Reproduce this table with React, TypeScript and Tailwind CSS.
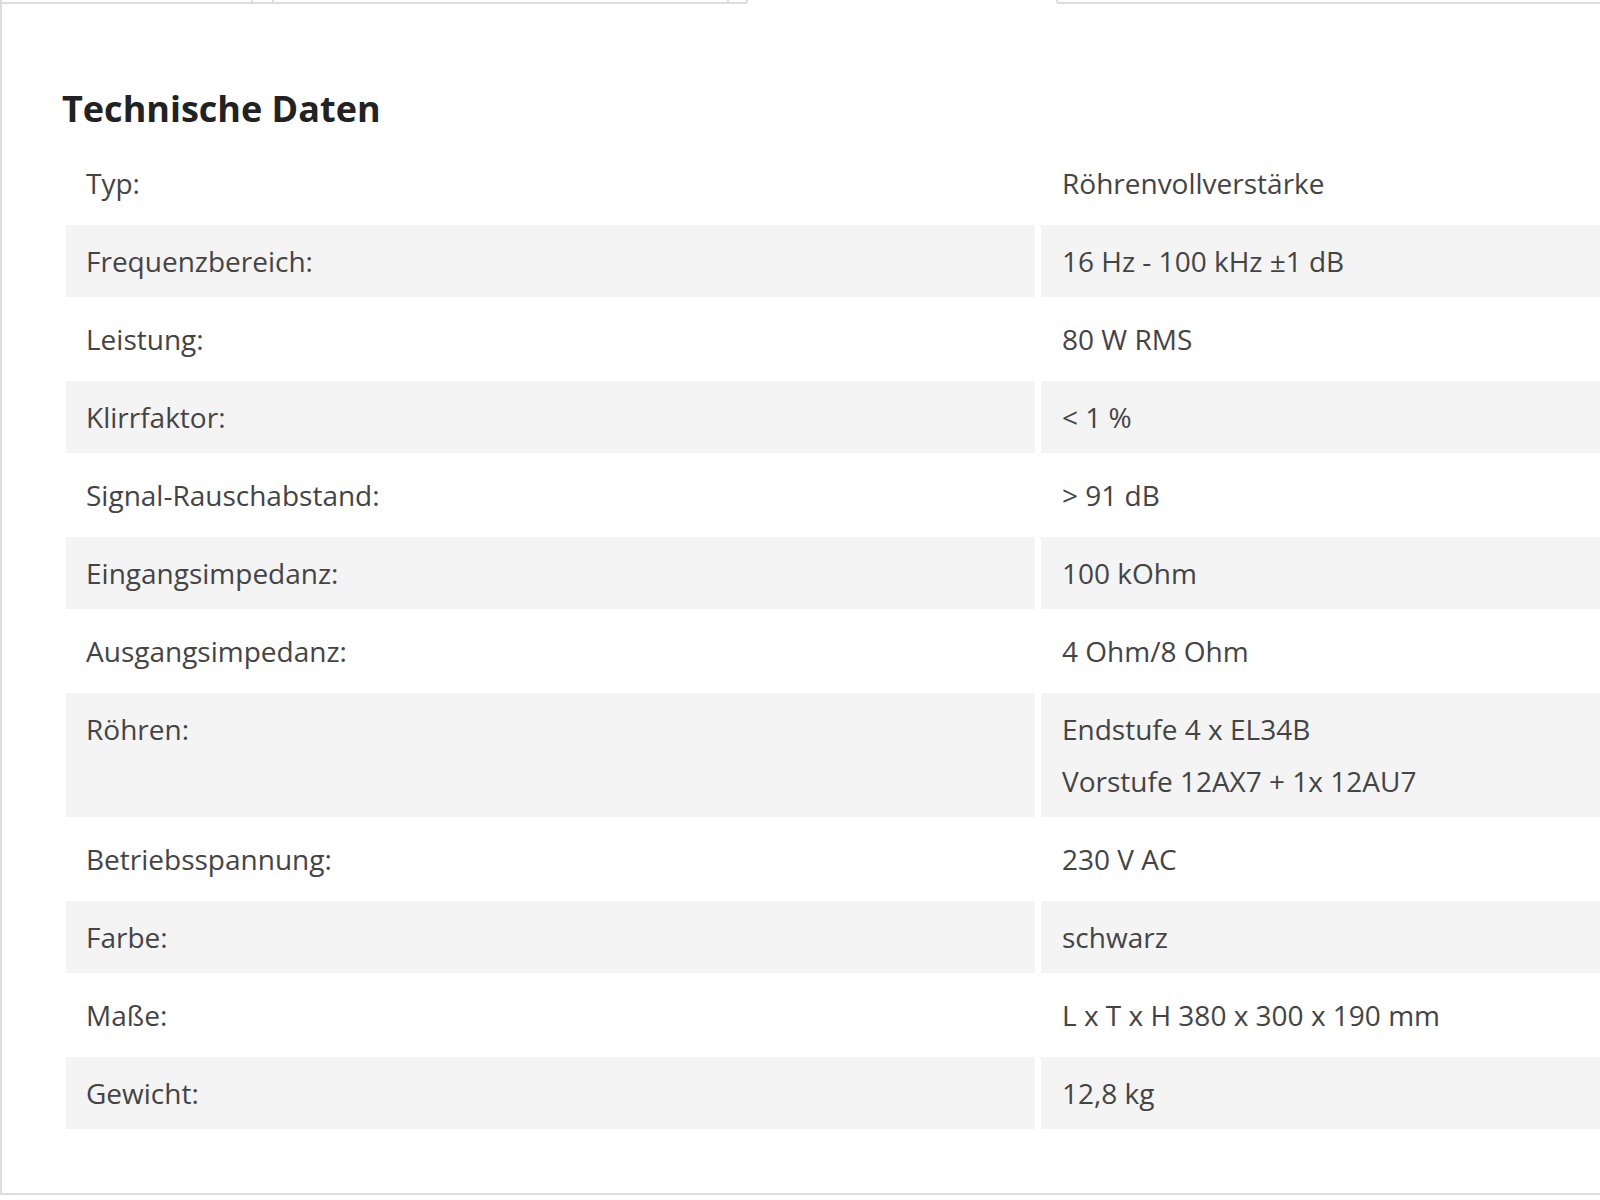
import React from 'react';

const specs: { label: string; values: string[] }[] = [
  { label: 'Typ:', values: ['Röhrenvollverstärke'] },
  { label: 'Frequenzbereich:', values: ['16 Hz - 100 kHz ±1 dB'] },
  { label: 'Leistung:', values: ['80 W RMS'] },
  { label: 'Klirrfaktor:', values: ['< 1 %'] },
  { label: 'Signal-Rauschabstand:', values: ['> 91 dB'] },
  { label: 'Eingangsimpedanz:', values: ['100 kOhm'] },
  { label: 'Ausgangsimpedanz:', values: ['4 Ohm/8 Ohm'] },
  { label: 'Röhren:', values: ['Endstufe 4 x EL34B', 'Vorstufe 12AX7 + 1x 12AU7'] },
  { label: 'Betriebsspannung:', values: ['230 V AC'] },
  { label: 'Farbe:', values: ['schwarz'] },
  { label: 'Maße:', values: ['L x T x H 380 x 300 x 190 mm'] },
  { label: 'Gewicht:', values: ['12,8 kg'] },
];

const App: React.FC = () => {
  return (
    <div
      className="w-[1600px] h-[1200px] overflow-hidden bg-white text-[#444]"
      style={{ fontFamily: '"Open Sans", "Noto Sans", sans-serif' }}
    >
      <div className="h-[1195px] border-l-2 border-b-2 border-[#dcdbe6]">
        {/* Cut-off form fields above the panel */}
        <div className="flex h-[4px]">
          <div className="w-[251px] border-b-2 border-r-2 border-[#dcdbe6]" />
          <div className="w-[21px] border-b-2 border-r-2 border-[#dcdbe6]" />
          <div className="w-[455px] border-b-2 border-r-2 border-[#dcdbe6]" />
          <div className="w-[19px] border-b-2 border-r-2 border-[#dcdbe6] rounded-br-[3px]" />
          <div className="ml-[308px] flex-1 border-b-2 border-l-2 border-[#dcdbe6] rounded-bl-[3px]" />
        </div>

        <div className="pl-[58px] pt-[87px]">
          <h2 className="ml-[2px] text-[36px] leading-[36px] font-bold text-[#222]">
            Technische Daten
          </h2>

          <table className="mt-[14px] w-[1956px] table-fixed border-separate border-spacing-[6px] text-[28px] leading-[52px]">
            <colgroup>
              <col className="w-[969px]" />
              <col className="w-[969px]" />
            </colgroup>
            <tbody>
              {specs.map((row, index) => {
                const bg = index % 2 === 1 ? 'bg-[#f4f4f4]' : 'bg-white';
                return (
                  <tr key={row.label}>
                    <td className={`${bg} align-top pl-[20px] pr-[21px] py-[10px]`}>{row.label}</td>
                    <td className={`${bg} align-top px-[21px] py-[10px]`}>
                      {row.values.map((v) => (
                        <div key={v}>{v}</div>
                      ))}
                    </td>
                  </tr>
                );
              })}
            </tbody>
          </table>
        </div>
      </div>
    </div>
  );
};

export default App;
